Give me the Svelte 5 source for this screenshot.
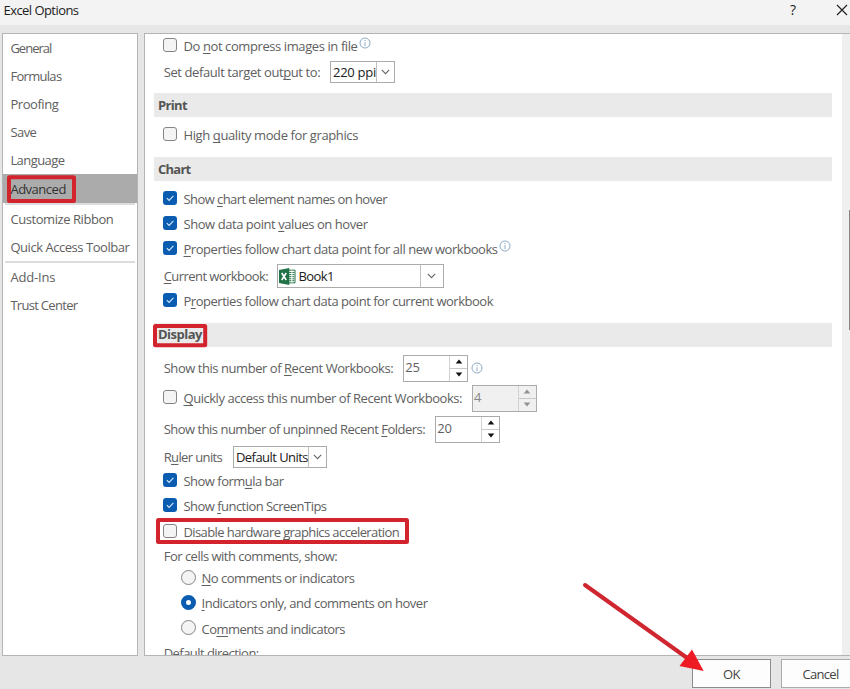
<script>
  const groups = [
    [['General', 41], ['Formulas', 51], ['Proofing', 48], ['Save', 26], ['Language', 54], ['Advanced', 55.5]],
    [['Customize Ribbon', 103], ['Quick Access Toolbar', 119]],
    [['Add-Ins', 45], ['Trust Center', 67]]
  ];
  let current = $state('Advanced');

  // Tracks a label out to the given width in pixels.
  function fit(node, width) {
    node.style.letterSpacing = '0px';
    const natural = node.getBoundingClientRect().width;
    node.style.letterSpacing = (width - natural) / node.textContent.length + 'px';
  }

  // "&" marks the access key that follows it.
  function split(text) {
    const i = text.indexOf('&');
    return i < 0 ? [text, '', ''] : [text.slice(0, i), text[i + 1], text.slice(i + 2)];
  }
</script>

{#snippet label(text, width)}
  {@const p = split(text)}
  <span class="label" use:fit={width}>{p[0]}{#if p[1]}<u>{p[1]}</u>{/if}{p[2]}</span>
{/snippet}

{#snippet check(text, width, on)}
  <span class="box" class:on>
    {#if on}<svg viewBox="0 0 14 14"><path d="M3.8 7.2 6.1 9.4 10.4 4.9" /></svg>{/if}
  </span>
  {@render label(text, width)}
{/snippet}

{#snippet info()}
  <svg class="info" viewBox="0 0 12 12">
    <circle cx="6" cy="6" r="5" />
    <path d="M6 5.2V9M6 3v1.1" />
  </svg>
{/snippet}

{#snippet chevron()}
  <span class="drop"><svg viewBox="0 0 9 6"><path d="M.8 .9 4.5 4.7 8.2 .9" /></svg></span>
{/snippet}

{#snippet spinner(value, width, disabled)}
  <span class="spinner" class:disabled>
    <span class="value">{@render label(value, width)}</span>
    <span class="arrows">
      <span><svg viewBox="0 0 8 5"><path d="M.7 4.6 4 .6l3.3 4z" /></svg></span>
      <span><svg viewBox="0 0 8 5"><path d="M.7 .4 4 4.4l3.3-4z" /></svg></span>
    </span>
  </span>
{/snippet}

<div class="window">
  <header>
    <span class="title">{@render label('Excel Options', 75)}</span>
    <span class="help">?</span>
    <svg class="close" viewBox="0 0 12 12"><path d="M1 1 11 11M11 1 1 11" /></svg>
  </header>

  <main>
    <nav>
      {#each groups as group, g}
        {#if g}<hr />{/if}
        {#each group as [name, width]}
          <div class="item" class:active={name === current}>{@render label(name, width)}</div>
        {/each}
      {/each}
    </nav>

    <section class="panel">
      <div class="content">
        <div class="row first">{@render check('Do &not compress images in file', 174, false)}<span class="raised">{@render info()}</span></div>
        <div class="row target">
          {@render label('Set default target out&put to:', 156.5)}
          <span class="combo ppi"><span class="text">{@render label('220 ppi', 43)}</span>{@render chevron()}</span>
        </div>

        <h2 class="print">{@render label('Print', 29)}</h2>
        <div class="row quality">{@render check('High &quality mode for graphics', 174.5, false)}</div>

        <h2 class="chart">{@render label('Chart', 32.5)}</h2>
        <div class="stack">
          <div class="row">{@render check('Show &chart element names on hover', 203.5, true)}</div>
          <div class="row">{@render check('Show data point &values on hover', 184, true)}</div>
          <div class="row">{@render check('&Properties follow chart data point for all new workbooks', 314, true)}<span class="raised">{@render info()}</span></div>
        </div>
        <div class="row workbook">
          {@render label('&Current workbook:', 104.5)}
          <span class="combo book">
            <svg class="excel" viewBox="0 0 17 17">
              <path d="M9 2.2h7v12.6H9z" fill="#fff" stroke="#217346" />
              <path d="M10.2 4.5h5M10.2 6.6h5M10.2 8.7h5M10.2 10.8h5M10.2 12.7h5" stroke="#217346" />
              <path d="M12.9 2.5v12" stroke="#fff" />
              <path d="M0 1.9 10.3 0v17L0 15.1z" fill="#217346" />
              <path d="M2.7 5 7.2 12M7.2 5 2.7 12" stroke="#fff" stroke-width="1.6" />
            </svg>
            <span class="text">{@render label('Book1', 35.5)}</span>
            {@render chevron()}
          </span>
        </div>
        <div class="row">{@render check('P&roperties follow chart data point for current workbook', 309.5, true)}</div>

        <h2 class="display">{@render label('Display', 44)}</h2>
        <div class="row spin one">
          {@render label('Show this number of &Recent Workbooks:', 229.5)}
          {@render spinner('25', 14.5, false)}
          {@render info()}
        </div>
        <div class="row spin two">
          {@render check('&Quickly access this number of Recent Workbooks:', 278.5, false)}
          {@render spinner('4', 8, true)}
        </div>
        <div class="row spin three">
          {@render label('Show this number of unpinned Recent &Folders:', 261.5)}
          {@render spinner('20', 14.5, false)}
        </div>
        <div class="row ruler">
          {@render label('R&uler units', 58.5)}
          <span class="combo units"><span class="text">{@render label('Default Units', 72)}</span>{@render chevron()}</span>
        </div>
        <div class="row">{@render check('Show form&ula bar', 100, true)}</div>
        <div class="row">{@render check('Show &function ScreenTips', 143, true)}</div>
        <div class="row">{@render check('Disable hardware &graphics acceleration', 215.5, false)}</div>
        <div class="row cells">{@render label('For cells with comments, show:', 173.5)}</div>
        <div class="radios">
          <div class="row"><span class="radio"></span>{@render label('&No comments or indicators', 153)}</div>
          <div class="row"><span class="radio on"></span>{@render label('&Indicators only, and comments on hover', 226)}</div>
          <div class="row"><span class="radio"></span>{@render label('Co&mments and indicators', 143.5)}</div>
        </div>
        <div class="row last">{@render label('Default direction:', 95)}</div>
      </div>
      <div class="scroll"><div class="thumb"></div></div>
    </section>
  </main>

  <footer>
    <button class="ok">{@render label('OK', 17)}</button>
    <button class="cancel">{@render label('Cancel', 36)}</button>
  </footer>

  <svg class="marks" viewBox="0 0 850 689">
    <rect x="9" y="177.2" width="65" height="23.8" rx="0.5" />
    <rect x="155" y="326" width="50.2" height="19.2" rx="0.5" />
    <rect x="158" y="520" width="249" height="22" rx="0.5" />
    <path class="shaft" d="M585 585 690 660" />
    <path class="head" d="M703.7 671 679.5 666 692 649.5z" />
  </svg>
</div>

<style>
  :global(body) { margin: 0; overflow: hidden; }
  .window {
    position: relative; width: 850px; height: 689px; overflow: hidden;
    display: flex; flex-direction: column; background: #e6e6e6; color: #606060;
    font: 13px/18px "Open Sans", "Noto Sans", sans-serif;
  }
  .window * { box-sizing: border-box; }
  svg { display: block; flex: none; fill: none; }
  .label { display: inline-block; white-space: pre; flex: none; }
  u { text-decoration-thickness: 1px; text-underline-offset: 2px; text-decoration-skip-ink: none; }

  header { height: 25px; flex: none; background: #f3f3f3; display: flex; align-items: center; padding: 0 2px 6px 3.5px; color: #1c1c1c; }
  .title { flex: 1; }
  .help { width: 46px; font-size: 14px; }
  .close { width: 12px; height: 12px; stroke: #222; stroke-width: 1.2; }

  main { display: flex; height: 631px; flex: none; padding: 8px 0 0 2px; gap: 6px; }
  nav { width: 136px; height: 623px; background: #fff; border: 1px solid #b4b4b4; }
  .item { height: 28.1px; padding-left: 7.4px; display: flex; align-items: center; }
  .active { background: #ababab; color: #333; }
  hr { height: 2px; margin: 0 2px; border: 0; background: #dcdcdc; }

  .panel { flex: 1; height: 623px; display: flex; background: #fff; border: 1px solid #b4b4b4; border-right: 0; overflow: hidden; }
  .content { flex: 1; padding: 0 10px 0 9px; }
  .scroll { width: 8px; background: #efefef; padding: 176px 0 0 7px; }
  .thumb { height: 120px; background: #868686; }

  .row { display: flex; align-items: center; height: 25.3px; padding-left: 9.7px; }
  .first { height: 24px; }
  .target { height: 25px; margin-top: 1px; }
  .quality { height: 35px; }
  h2 { margin: 0; height: 24px; padding: 0 0 1px 4px; background: #eaeaea; font: inherit; font-weight: 700; color: #555; display: flex; align-items: center; }
  .print { margin-top: 9px; }
  .chart { margin-top: 5px; }
  .display { margin-top: 9.1px; }
  .stack { padding-top: 5px; }

  .box { width: 14px; height: 14px; margin: 0 6.5px 2px -0.7px; border: 1px solid #858585; border-radius: 3px; background: #f4f4f4; flex: none; }
  .box.on { border: 0; background: #0a5cb0; }
  .box svg { width: 14px; height: 14px; stroke: #d8e9fa; stroke-width: 1.1; }
  .info { width: 12px; height: 12px; stroke: #7f9fc0; stroke-width: 0.9; }
  .raised { padding: 0 0 6px 1.4px; }

  .combo { display: flex; align-items: center; height: 22px; border: 1px solid #ababab; background: #fff; color: #202020; }
  .combo .text { flex: 1; padding-left: 2px; }
  .drop { align-self: stretch; width: 18px; border-left: 1px solid #c0c0c0; display: flex; align-items: center; justify-content: center; flex: none; }
  .drop svg { width: 9px; height: 6px; stroke: #666; stroke-width: 1.1; }
  .ppi { width: 65.5px; margin-left: 9.8px; }
  .workbook { height: 26.5px; padding-top: 2px; }
  .book { width: 166.5px; height: 24px; margin-left: 9.3px; }
  .book .drop { width: 23px; }
  .excel { width: 17px; height: 17px; margin-left: 1px; }
  .units { width: 94px; margin-left: 10.8px; }
  .ruler { height: 22px; margin: 3px 0 0.6px; }

  .spin { height: 27px; }
  .one { margin-top: 8px; }
  .two { margin-top: 3px; }
  .three { margin-top: 4px; }
  .spinner { display: flex; width: 65px; height: 27px; margin-left: 10px; border: 1px solid #ababab; background: #fff; flex: none; }
  .value { flex: 1; padding: 2px 0 0 1px; }
  .arrows { width: 18px; border-left: 1px solid #d2d2d2; display: flex; flex-direction: column; }
  .arrows span { flex: 1; display: flex; align-items: center; justify-content: center; }
  .arrows span + span { border-top: 1px solid #c8c8c8; }
  .arrows svg { width: 8px; height: 5px; fill: #111; }
  .disabled { background: #f0f0f0; color: #888; }
  .disabled .arrows svg { fill: #929292; }
  .one .info { margin-left: 3px; }

  .cells { height: 22px; margin-top: 0.5px; }
  .radios { padding-left: 17px; margin-top: -1.3px; }
  .radio { width: 15px; height: 15px; margin: 0 5.8px 2px 0; border: 1px solid #858585; border-radius: 50%; background: #f4f4f4; flex: none; }
  .radio.on { border: 5px solid #0a5cb0; background: #fff; }
  .last { margin-top: -0.8px; }

  footer { flex: 1; display: flex; gap: 10px; padding: 3px 0 0 692px; }
  button { height: 29px; flex: none; padding: 0; font: inherit; color: #444; background: #fdfdfd; border: 1px solid #ababab; border-radius: 0; }
  .ok { width: 79px; border-color: #8c8c8c; }
  .cancel { width: 79px; }

  .marks { position: absolute; inset: 0; width: 850px; height: 689px; pointer-events: none; }
  .marks rect { stroke: #d3242e; stroke-width: 4; }
  .shaft { stroke: #cf2630; stroke-width: 4; stroke-linecap: round; }
  .head { fill: #ed1c24; }
</style>
